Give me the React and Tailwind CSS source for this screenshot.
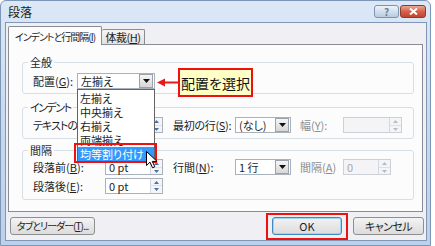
import React from 'react';

const K = ({ k }) => (
    <>
        (<u>{k}</u>)
    </>
);

const DropButton = () => (
    <span className="m-px flex h-[14px] w-[14px] items-center justify-center border border-[#9aa3ad] bg-gradient-to-b from-[#f6f6f6] to-[#d6d6d6]">
        <svg width="7" height="4" viewBox="0 0 7 4">
            <path d="M0 0h7L3.5 4z" fill="#111" />
        </svg>
    </span>
);

const SelectBox = ({ value, width }) => (
    <div className={`flex h-[16px] items-center border border-[#a9b1bb] bg-white ${width}`}>
        <span className="flex-1 pl-[3px] leading-[14px] whitespace-nowrap">{value}</span>
        <DropButton />
    </div>
);

const SpinBox = ({ value, width, disabled }) => {
    const arrow = disabled ? '#b8bcc2' : '#4d6f9e';
    return (
        <div
            className={`flex h-[16px] items-center border ${width} ${
                disabled ? 'border-[#ccd1d7] bg-[#f4f3f6] text-[#a8a8a8]' : 'border-[#a9b1bb] bg-white'
            }`}
        >
            <span className="flex-1 pl-[3px] leading-[14px] whitespace-nowrap">{value}</span>
            <span className="flex h-full w-[12px] flex-col border-l border-[#d3d8de] bg-[#f3f5f8]">
                <span className="flex flex-1 items-center justify-center border-b border-[#dde1e6]">
                    <svg width="5" height="3" viewBox="0 0 5 3">
                        <path d="M0 3h5L2.5 0z" fill={arrow} />
                    </svg>
                </span>
                <span className="flex flex-1 items-center justify-center">
                    <svg width="5" height="3" viewBox="0 0 5 3">
                        <path d="M0 0h5L2.5 3z" fill={arrow} />
                    </svg>
                </span>
            </span>
        </div>
    );
};

const Group = ({ title, className, titleClass = '', children }) => (
    <fieldset className={`rounded-[3px] border border-[#d6dfe6] ${className}`}>
        <legend className={`ml-[5px] px-[2px] text-[11px] leading-[12px] ${titleClass}`}>{title}</legend>
        {children}
    </fieldset>
);

const Button = ({ children, width, focused }) => (
    <div
        className={`flex h-[18px] items-center justify-center rounded-[3px] border bg-gradient-to-b from-[#f3f3f3] to-[#dcdcdc] leading-none whitespace-nowrap ${width} ${
            focused ? 'border-[#3d8ac4] shadow-[inset_0_0_0_1px_#9fd4f3]' : 'border-[#8e8f8f]'
        }`}
    >
        {children}
    </div>
);

const App = () => {
    return (
        <div className="relative h-[246px] w-[435px] overflow-hidden bg-white font-['Noto_Sans_CJK_JP',sans-serif] text-[11px] text-[#1e1e1e] [font-feature-settings:'palt']">
            {/* window frame */}
            <div className="flex h-[246px] w-[431px] flex-col rounded-t-[6px] border border-[#7d96b6] bg-gradient-to-b from-[#dce8f6] via-[#c7d9ef] to-[#bcd1ea] px-[4px] pr-[3px] pb-[4px]">
                {/* title bar */}
                <div className="flex h-[21px] items-start">
                    <span className="mt-[4px] pl-[3px] text-[12px] leading-[14px] text-[#222]">段落</span>
                    <div className="ml-auto mt-[4px] flex gap-[1px] pr-[1px]">
                        <div className="flex h-[13px] w-[25px] items-center justify-center rounded-[3px] border border-[#7d93b0] bg-gradient-to-b from-[#eef3f9] to-[#b8cbe2]">
                            <span className="text-[10px] leading-none font-bold text-[#6a7d96]">?</span>
                        </div>
                        <div className="flex h-[13px] w-[26px] items-center justify-center rounded-[3px] border border-[#8b3b2d] bg-gradient-to-b from-[#eaa796] via-[#d5604a] to-[#c14430]">
                            <svg width="9" height="7" viewBox="0 0 9 7">
                                <path d="M1 0.5l7 6M8 0.5l-7 6" stroke="#fff" strokeWidth="2" />
                            </svg>
                        </div>
                    </div>
                </div>

                {/* client area */}
                <div className="flex h-[219px] flex-col border border-[#8197b5] bg-[#f0eff3]">
                    {/* tabs */}
                    <div className="mt-[3px] ml-[2px] flex h-[18px] items-end">
                        <div className="relative z-10 -mb-px flex h-[19px] w-[94px] items-center justify-center rounded-t-[2px] border border-b-0 border-[#898c95] bg-[#fcfcfd] text-[10px] tracking-[-1px] whitespace-nowrap">
                            インデントと行間隔<K k="I" />
                        </div>
                        <div className="flex h-[15px] w-[43px] items-center justify-center rounded-t-[2px] border border-b-0 border-l-0 border-[#898c95] bg-gradient-to-b from-[#f4f4f4] to-[#e2e2e2] tracking-[-0.5px] whitespace-nowrap">
                            体裁<K k="H" />
                        </div>
                    </div>

                    {/* tab panel */}
                    <div className="ml-[2px] flex h-[168px] w-[415px] flex-col border border-[#898c95] bg-[#fcfcfd] pt-[11px] pl-[13px] pr-[8px]">
                        <Group title="全般" className="h-[38px]">
                            <div className="flex items-center pt-[5px] pl-[10px]">
                                <span className="w-[44px] whitespace-nowrap">
                                    配置<K k="G" />:
                                </span>
                                <SelectBox value="左揃え" width="w-[78px]" />
                            </div>
                        </Group>

                        <Group title="インデント" titleClass="tracking-[-1.5px]" className="mt-[7px] h-[38px]">
                            <div className="flex items-center pt-[4px] pl-[10px]">
                                <span className="w-[72px] overflow-hidden tracking-[-1px] whitespace-nowrap">
                                    テキストの前<K k="R" />:
                                </span>
                                <SpinBox value="" width="w-[58px]" />
                                <span className="ml-[10px] w-[62px] tracking-[-0.3px] whitespace-nowrap">
                                    最初の行<K k="S" />:
                                </span>
                                <SelectBox value="(なし)" width="w-[56px]" />
                                <span className="ml-[9px] w-[43px] whitespace-nowrap text-[#8d8d8d]">
                                    幅<K k="Y" />:
                                </span>
                                <SpinBox value="" width="w-[59px]" disabled />
                            </div>
                        </Group>

                        <Group title="間隔" className="mt-[5px] h-[56px]">
                            <div className="flex flex-col gap-[2px] pt-[3px] pl-[10px]">
                                <div className="flex items-center">
                                    <span className="w-[72px] whitespace-nowrap">
                                        段落前<K k="B" />:
                                    </span>
                                    <SpinBox value="0 pt" width="w-[58px]" />
                                    <span className="ml-[10px] w-[62px] whitespace-nowrap">
                                        行間<K k="N" />:
                                    </span>
                                    <SelectBox value="1 行" width="w-[56px]" />
                                    <span className="ml-[9px] w-[43px] whitespace-nowrap text-[#8d8d8d]">
                                        間隔<K k="A" />
                                    </span>
                                    <SpinBox value="0" width="w-[48px]" disabled />
                                </div>
                                <div className="flex items-center">
                                    <span className="w-[72px] whitespace-nowrap">
                                        段落後<K k="E" />:
                                    </span>
                                    <SpinBox value="0 pt" width="w-[58px]" />
                                </div>
                            </div>
                        </Group>
                    </div>

                    {/* buttons */}
                    <div className="mt-[5px] flex items-center pl-[4px] pr-[2px]">
                        <Button width="w-[85px] text-[10px] tracking-[-1px]">
                            タブとリーダー<K k="T" />...
                        </Button>
                        <div className="relative ml-auto">
                            <Button width="w-[70px] text-[11px]" focused>
                                OK
                            </Button>
                            <div className="absolute -inset-x-[6px] -top-[4px] -bottom-[5px] border-2 border-[#ee1111]" />
                        </div>
                        <div className="ml-[11px]">
                            <Button width="w-[71px] text-[11px] tracking-[-0.5px]">キャンセル</Button>
                        </div>
                    </div>
                </div>
            </div>

            {/* open dropdown list */}
            <div className="absolute top-[89px] left-[77px] flex w-[78px] flex-col border border-[#646464] bg-white py-px">
                {['左揃え', '中央揃え', '右揃え', '両端揃え'].map((item) => (
                    <div key={item} className="h-[14px] pl-[2px] leading-[14px] whitespace-nowrap">
                        {item}
                    </div>
                ))}
                <div className="h-[14px] bg-[#3399ff] pl-[2px] leading-[14px] text-white whitespace-nowrap">
                    均等割り付け
                </div>
            </div>
            <div className="absolute top-[143px] left-[74px] h-[20px] w-[83px] border-2 border-[#ee1111]" />

            {/* mouse cursor */}
            <svg className="absolute top-[151px] left-[146px]" width="12" height="18" viewBox="0 0 12 18">
                <path d="M0.5 0.5v14l3.5-3.3 2.6 5.6 2.2-1-2.5-5.4h4.8z" fill="#fff" stroke="#000" strokeWidth="1" />
            </svg>

            {/* callout */}
            <svg className="absolute top-[78px] left-[157px]" width="22" height="9" viewBox="0 0 22 9">
                <path d="M0 4.5L8 0.5v8z" fill="#e31b1b" />
                <path d="M7 4.5h15" stroke="#e31b1b" strokeWidth="2" />
            </svg>
            <div className="absolute top-[68px] left-[178px] flex h-[29px] w-[75px] items-center justify-center border-2 border-[#ee1111] bg-[#ffffc6] text-[14px] leading-none text-[#111] whitespace-nowrap">
                配置を選択
            </div>
        </div>
    );
};

export default App;
